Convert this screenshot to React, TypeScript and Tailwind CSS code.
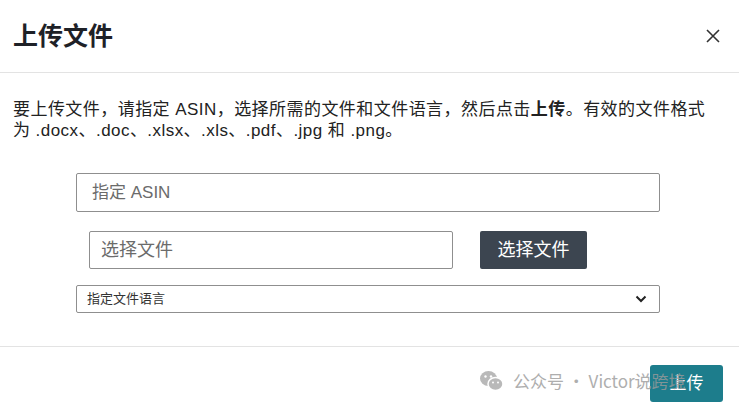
import React from "react";

export default function App() {
  return (
    <div
      className="relative w-[739px] h-[411px] bg-white overflow-hidden text-[#222]"
      style={{ fontFamily: '"Liberation Sans", Arial, "Noto Sans CJK SC", sans-serif' }}
    >
      <div className="h-[73px] flex items-center justify-between pl-[13px] pr-[19px] border-b border-[#e3e3e3]">
        <h1 className="text-[25px] font-bold text-[#1e2127] leading-none">上传文件</h1>
        <svg width="14" height="14" viewBox="0 0 14 14" className="text-[#333]">
          <path d="M1 1 L13 13 M13 1 L1 13" stroke="currentColor" strokeWidth="1.6" />
        </svg>
      </div>

      <div className="pt-[26px] pl-[13px] pr-[20px]">
        <p className="text-[17px] leading-[21px] text-[#222] tracking-[0.45px]">
          要上传文件，请指定 ASIN，选择所需的文件和文件语言，然后点击<span className="font-bold">上传</span>。有效的文件格式为 .docx、.doc、.xlsx、.xls、.pdf、.jpg 和 .png。
        </p>
      </div>

      <div className="mt-[32px] pl-[76px] pr-[79px] flex flex-col">
        <div className="h-[39px] border border-[#8f8f8f] rounded-[2px] flex items-center pl-[15px] text-[17px] text-[#6b6b6b]">
          指定 ASIN
        </div>
        <div className="mt-[19px] pl-[13px] flex items-center gap-[27px]">
          <div className="w-[364px] h-[38px] border border-[#8f8f8f] rounded-[2px] flex items-center pl-[11px] text-[18px] text-[#6b6b6b]">
            选择文件
          </div>
          <div className="w-[107px] h-[38px] bg-[#3c4550] rounded-[2px] flex items-center justify-center text-[18px] text-white">
            选择文件
          </div>
        </div>
        <div className="mt-[16px] h-[28px] border border-[#8f8f8f] rounded-[2px] flex items-center justify-between pl-[10px] pr-[12px] text-[13px] text-[#333]">
          <span>指定文件语言</span>
          <svg width="12" height="8" viewBox="0 0 12 8">
            <path d="M1.5 1.5 L6 6 L10.5 1.5" stroke="#222" strokeWidth="2" fill="none" />
          </svg>
        </div>
      </div>

      <div className="absolute left-0 right-0 top-[346px] border-t border-[#e3e3e3] flex justify-end pt-[18px] pr-[16px]">
        <div className="w-[73px] h-[37px] bg-[#1d7d8c] rounded-[3px] flex items-center justify-center text-[17px] text-white">
          上传
        </div>
      </div>

      <div className="absolute left-[479px] top-[368px] flex items-center gap-[9px] text-[17px] text-[#9a9a9a] opacity-80 pointer-events-none">
        <svg width="25" height="22" viewBox="0 0 25 22">
          <ellipse cx="9.5" cy="8.5" rx="8.5" ry="7.5" fill="#a8a8a8" />
          <ellipse cx="16.5" cy="14" rx="7.5" ry="6.5" fill="#a8a8a8" stroke="#fff" strokeWidth="1.5" />
          <circle cx="6.5" cy="6.5" r="1.2" fill="#fff" />
          <circle cx="12" cy="6.5" r="1.2" fill="#fff" />
          <circle cx="14" cy="12.5" r="1" fill="#fff" />
          <circle cx="19" cy="12.5" r="1" fill="#fff" />
        </svg>
        <span style={{ fontFamily: '"Noto Sans CJK SC", sans-serif' }}>公众号 · Victor说跨境</span>
      </div>
    </div>
  );
}
